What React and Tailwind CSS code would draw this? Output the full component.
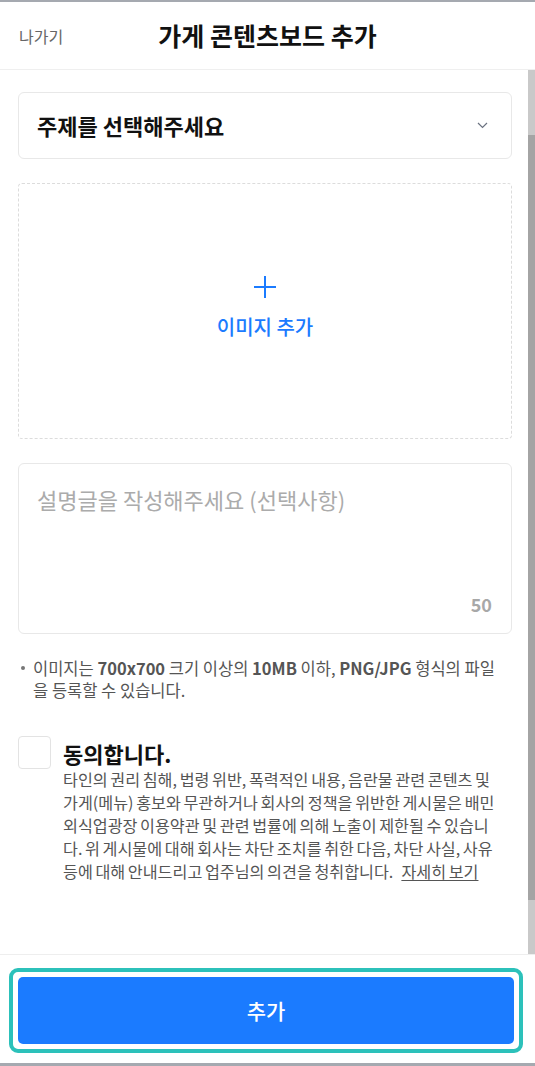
import React from "react";

const Chevron = () => (
  <svg width="11" height="7" viewBox="0 0 11 7" fill="none">
    <path d="M1 1l4.5 4.5L10 1" stroke="#6b7280" strokeWidth="1.2" />
  </svg>
);

const Plus = () => (
  <svg width="24" height="24" viewBox="0 0 24 24" fill="none">
    <path d="M12 1v22M1 12h22" stroke="#1b7bff" strokeWidth="2" />
  </svg>
);

const App = () => (
  <div className="flex h-[1066px] flex-col border-t-2 border-b-[3px] border-[#a5a9b0] bg-white font-['Noto_Sans_CJK_KR','Noto_Sans',sans-serif]">
    <header className="grid h-[68px] shrink-0 grid-cols-[80px_1fr_80px] items-center border-b border-[#efefef]">
      <button className="pl-[19px] text-left text-[16px] text-[#666]">나가기</button>
      <h1 className="text-center text-[25px] font-bold text-[#111]">가게 콘텐츠보드 추가</h1>
      <span />
    </header>

    <div className="flex min-h-0 flex-1">
      <main className="flex-1 pl-[18px] pr-[16px] pt-[22px]">
        <div className="flex h-[67px] items-center justify-between rounded-[6px] border border-[#e8e8e8] pl-[18px] pr-[23px]">
          <span className="text-[22px] font-bold text-[#111]">주제를 선택해주세요</span>
          <Chevron />
        </div>

        <div className="mt-[24px] flex h-[256px] flex-col items-center justify-center rounded-[4px] border border-dashed border-[#dcdcdc] pb-[6px]">
          <Plus />
          <span className="mt-[14px] text-[20px] font-medium leading-[28px] text-[#1b7bff]">이미지 추가</span>
        </div>

        <div className="mt-[24px] flex h-[171px] flex-col justify-between rounded-[6px] border border-[#e8e8e8] pb-[17px] pl-[18px] pr-[19px] pt-[20px]">
          <span className="text-[22px] leading-[30px] text-[#ababab]">설명글을 작성해주세요 (선택사항)</span>
          <span className="self-end text-[18px] font-bold leading-[24px] text-[#a8a8a8]">50</span>
        </div>

        <div className="mt-[23px] flex text-[16.5px] leading-[22px] text-[#555]">
          <span className="ml-[3px] mt-[9px] h-[4px] w-[4px] shrink-0 rounded-full bg-[#777]" />
          <p className="ml-[8px]">
            이미지는 <b className="font-semibold">700x700</b> 크기 이상의 <b className="font-semibold">10MB</b> 이하, <b className="font-semibold">PNG/JPG</b> 형식의 파일
            <br />을 등록할 수 있습니다.
          </p>
        </div>

        <div className="mt-[35px] flex items-start gap-[12px]">
          <span className="h-[33px] w-[33px] shrink-0 rounded-[4px] border border-[#e3e3e3]" />
          <div className="mt-[2px]">
            <p className="text-[22px] font-semibold leading-[30px] text-[#111]">동의합니다.</p>
            <p className="whitespace-nowrap text-[16.2px] leading-[23px] text-[#555] [word-spacing:-1px]">
              타인의 권리 침해, 법령 위반, 폭력적인 내용, 음란물 관련 콘텐츠 및<br />
              가게(메뉴) 홍보와 무관하거나 회사의 정책을 위반한 게시물은 배민<br />
              외식업광장 이용약관 및 관련 법률에 의해 노출이 제한될 수 있습니<br />
              다. 위 게시물에 대해 회사는 차단 조치를 취한 다음, 차단 사실, 사유<br />
              등에 대해 안내드리고 업주님의 의견을 청취합니다.
              <a className="ml-[8px] underline underline-offset-2">자세히 보기</a>
            </p>
          </div>
        </div>
      </main>

      <div className="flex w-[7px] shrink-0 flex-col">
        <div className="h-[65px] bg-[#c9c9c9]" />
        <div className="h-[765px] bg-[#a4a4a4]" />
        <div className="flex-1 bg-[#c9c9c9]" />
      </div>
    </div>

    <footer className="shrink-0 border-t border-[#eeeeee] px-[9px] pb-[10px] pt-[13px]">
      <div className="mr-[3px] rounded-[9px] border-4 border-[#2cc1ba] p-[5px]">
        <button className="h-[67px] w-full rounded-[5px] bg-[#1b7bff] text-[21px] font-medium text-white">추가</button>
      </div>
    </footer>
  </div>
);

export default App;
